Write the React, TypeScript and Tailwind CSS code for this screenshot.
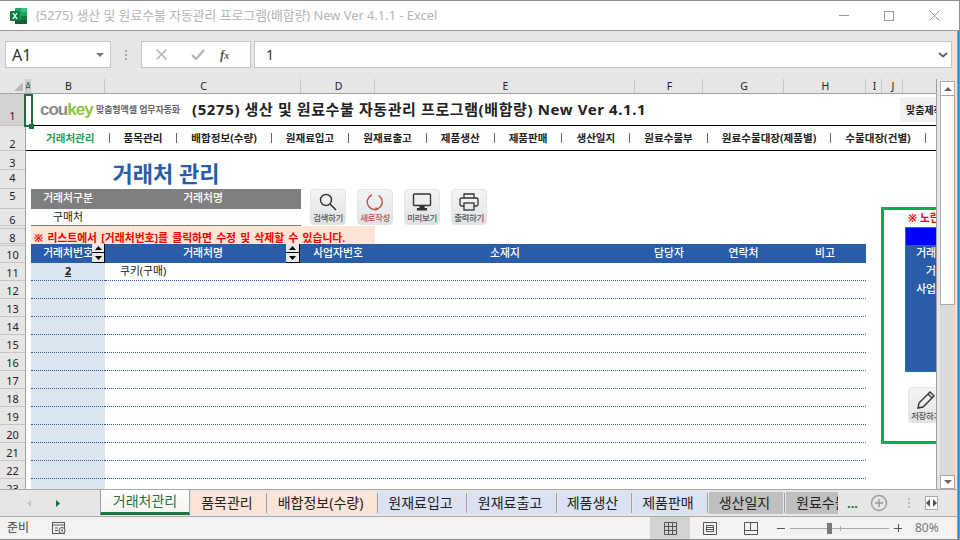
import React from "react";

const font = { fontFamily: '"Noto Sans", "Noto Sans CJK KR", sans-serif' };
const cols = "grid grid-cols-[5px_74px_196px_74px_260px_68px_81px_82px_70px]";

const colHeads: [string, number, boolean?][] = [
  ["A", 5, true], ["B", 74], ["C", 196], ["D", 74], ["E", 260], ["F", 68], ["G", 81], ["H", 82], ["I", 16], ["J", 21], ["", 33],
];
const rowHeads: [string, number, number][] = [
  ["1", 32, 4], ["2", 25, 1], ["3", 19, 1], ["4", 19, 5], ["5", 20, 7], ["6", 17, 0], ["", 3, 0], ["8", 15, 0], ["", 2, 0], ["10", 17, 2],
  ["11", 18, 2], ["12", 18, 2], ["13", 18, 2], ["14", 18, 2], ["15", 18, 2], ["16", 18, 2], ["17", 18, 2], ["18", 18, 2], ["19", 18, 2], ["20", 18, 2], ["21", 18, 2], ["22", 18, 2], ["23", 18, 2],
];
const nav = ["품목관리", "배합정보(수량)", "원재료입고", "원재료출고", "제품생산", "제품판매", "생산일지", "원료수불부", "원료수불대장(제품별)", "수불대장(건별)"];
const blankRows = Array.from({ length: 11 }, (_, i) => i);

function Spinner({ wide }: { wide?: boolean }) {
  return (
    <div className={`absolute top-0 flex h-[19px] flex-col border-r border-b border-black bg-[#e8e8e8] ${wide ? "right-[1px] w-[14px]" : "right-0 w-[13px]"}`}>
      <div className="flex h-[9px] items-center justify-center border-b border-black">
        <svg width="7" height="4" viewBox="0 0 7 4"><path d="M3.5 0L7 4H0z" fill="#000" /></svg>
      </div>
      <div className="flex flex-1 items-center justify-center">
        <svg width="7" height="4" viewBox="0 0 7 4"><path d="M0 0h7L3.5 4z" fill="#000" /></svg>
      </div>
    </div>
  );
}

function ShapeButton({ label, red, children }: { label: string; red?: boolean; children: React.ReactNode }) {
  return (
    <div className="flex h-[36px] w-[36px] shrink-0 flex-col items-center rounded-[4px] border border-[#e4e4e4] bg-gradient-to-b from-[#f4f4f4] to-[#dfe3e6] pt-[2px]">
      <div className="flex h-[20px] items-center justify-center">{children}</div>
      <div className={`whitespace-nowrap text-[8.5px] font-medium leading-[12px] tracking-[-0.4px] ${red ? "text-[#c0504d]" : "text-[#555]"}`}>{label}</div>
    </div>
  );
}

function Tab({ label, cls, w }: { label: string; cls: string; w: number }) {
  return (
    <>
      <div style={{ width: w }} className={`flex h-[22px] shrink-0 items-center justify-center overflow-hidden whitespace-nowrap pb-[2px] pr-[3px] text-[14px] text-[#222] ${cls}`}>{label}</div>
      <div className="mx-[1px] h-[20px] w-[1px] shrink-0 bg-[#a0a0a0]" />
    </>
  );
}

export default function App() {
  return (
    <div style={font} className="flex h-[540px] w-[960px] flex-col overflow-hidden border-t border-r border-b border-[#8f8f8f] bg-white text-black">
      {/* Title bar */}
      <div className="flex h-[30px] shrink-0 items-center border-b border-[#9a9a9a] bg-white pl-[10px]">
        <svg width="17" height="16" viewBox="0 0 17 16" className="shrink-0">
          <rect x="5" y="0" width="12" height="16" rx="1" fill="#21a366" />
          <rect x="11" y="0" width="6" height="4" fill="#33c481" />
          <rect x="11" y="8" width="6" height="4" fill="#107c41" />
          <rect x="5" y="12" width="12" height="4" fill="#185c37" />
          <rect x="0" y="3" width="10" height="10" rx="1" fill="#107c41" />
          <path d="M2.4 5h1.5L5 7l1.2-2h1.4L5.8 8l1.9 3H6.2L5 9 3.8 11H2.3l1.9-3z" fill="#fff" />
        </svg>
        <div className="ml-[9px] whitespace-nowrap text-[12.85px] text-[#b4b4b4]">(5275) 생산 및 원료수불 자동관리 프로그램(배합량) New Ver 4.1.1 - Excel</div>
        <div className="ml-auto flex items-center gap-[35px] pr-[19px]">
          <div className="h-[1px] w-[10px] bg-[#9a9a9a]" />
          <div className="h-[10px] w-[10px] border border-[#9a9a9a]" />
          <svg width="11" height="11" viewBox="0 0 11 11"><path d="M0.5 0.5l10 10M10.5 0.5l-10 10" stroke="#9a9a9a" fill="none" /></svg>
        </div>
      </div>

      {/* Formula bar */}
      <div className="flex h-[48px] shrink-0 items-start border-r border-[#1e88d0] bg-[#e6e6e6] pl-[5px] pr-[6px] pt-[10px] shadow-[inset_-1px_0_0_#a0a0a0]">
        <div className="flex h-[27px] w-[106px] shrink-0 items-center border border-[#c6c6c6] bg-white pl-[6px] text-[16px] text-[#333]">
          A1
          <svg width="8" height="4" viewBox="0 0 8 4" className="ml-auto mr-[6px]"><path d="M0 0h8L4 4z" fill="#777" /></svg>
        </div>
        <div className="flex h-[27px] w-[30px] shrink-0 flex-col items-center justify-center gap-[2px]">
          <div className="h-[2px] w-[2px] bg-[#a8a8a8]" />
          <div className="h-[2px] w-[2px] bg-[#a8a8a8]" />
          <div className="h-[2px] w-[2px] bg-[#a8a8a8]" />
        </div>
        <div className="flex h-[27px] w-[110px] shrink-0 items-center border border-[#c6c6c6] bg-white pl-[14px]">
          <svg width="11" height="11" viewBox="0 0 11 11"><path d="M0.5 0.5l10 10M10.5 0.5l-10 10" stroke="#b4b4b4" strokeWidth="1.5" fill="none" /></svg>
          <svg width="14" height="11" viewBox="0 0 14 11" className="ml-[24px]"><path d="M1 6l4 4 8-9" stroke="#b4b4b4" strokeWidth="2.2" fill="none" /></svg>
          <span style={{ fontFamily: '"Liberation Serif", serif' }} className="ml-[15px] text-[13px] font-bold italic text-[#555]">f<span className="text-[10px]">x</span></span>
        </div>
        <div className="ml-[3px] flex h-[27px] flex-1 items-center border border-[#c6c6c6] bg-white pl-[11px] text-[14px] text-[#333]">
          1
          <svg width="10" height="6" viewBox="0 0 10 6" className="ml-auto mr-[3px]"><path d="M1 1l4 3.5L9 1" stroke="#666" strokeWidth="1.8" fill="none" /></svg>
        </div>
      </div>

      {/* Grid + scrollbar */}
      <div className="flex h-[410px] shrink-0 bg-[#e6e6e6]">
        <div className="flex w-[936px] shrink-0 flex-col overflow-hidden">
          {/* Column headers */}
          <div className="flex h-[15px] shrink-0 border-b border-[#a0a0a0] bg-[#e6e6e6]">
            <div className="flex h-[14px] w-[26px] shrink-0 items-end justify-end border-r border-[#c6c6c6] pb-[2px] pr-[2px]">
              <svg width="9" height="9" viewBox="0 0 9 9"><path d="M9 0v9H0z" fill="#b8b8b8" /></svg>
            </div>
            {colHeads.map(([c, w, sel], i) => (
              <div key={i} style={{ width: w }} className={`flex h-[14px] shrink-0 items-center justify-center overflow-hidden text-[10.5px] leading-none ${sel ? "bg-[#d2d2d2] text-[#1d6f42]" : "pl-[2px] text-[#222]"} ${i === colHeads.length - 1 ? "" : "border-r border-[#c6c6c6]"}`}>{c}</div>
            ))}
          </div>

          <div className="relative flex h-[395px] overflow-hidden">
            {/* Row headers */}
            <div className="flex w-[26px] shrink-0 flex-col border-r border-[#a0a0a0] bg-[#e6e6e6]">
              {rowHeads.map(([r, h, pb], i) => (
                <div key={i} style={{ height: h, paddingBottom: pb }} className={`flex shrink-0 items-end justify-center overflow-hidden border-b border-[#c6c6c6] text-[11px] leading-[10px] text-[#222] ${r === "1" ? "bg-[#d2d2d2]" : ""}`}>{r}</div>
              ))}
            </div>

            {/* Sheet */}
            <div className="relative w-[910px] shrink-0 overflow-hidden bg-white text-[10.8px] leading-none">
              {/* Row 1 */}
              <div className="flex h-[32px] items-center border-b border-black pl-[14px]">
                <div style={{ fontFamily: '"Liberation Sans", sans-serif' }} className="w-[56px] shrink-0 text-[17px] font-bold tracking-[-1px]">
                  <span className="text-[#8c8c8c]">cou</span><span className="text-[#8dc63f]">key</span>
                </div>
                <div className="w-[96px] shrink-0 whitespace-nowrap text-[9px] font-bold tracking-[-0.1px] text-[#666]">맞춤형엑셀 업무자동화</div>
                <div className="whitespace-nowrap text-[15px] font-bold tracking-[0.6px] text-[#222]">(5275) 생산 및 원료수불 자동관리 프로그램(배합량) New Ver 4.1.1</div>
                <div className="ml-auto flex h-[25px] w-[36px] items-center overflow-hidden whitespace-nowrap bg-[#f2f2f2] pl-[6px] text-[10px] font-bold text-[#222]">맞춤제작</div>
              </div>
              {/* Row 2 */}
              <div className="flex h-[25px] items-center gap-[14px] whitespace-nowrap border-b border-black pl-[20px] text-[10.55px] font-bold text-[#222]">
                <span className="text-[#1fa055]">거래처관리</span>
                {nav.map((n) => (
                  <React.Fragment key={n}>
                    <span className="h-[10px] w-[1px] bg-[#666]" />
                    <span>{n}</span>
                  </React.Fragment>
                ))}
                <span className="h-[10px] w-[1px] bg-[#666]" />
              </div>
              {/* Rows 3-4 */}
              <div className={`${cols} h-[38px]`}>
                <div />
                <div className="col-span-2 flex items-center justify-center pt-[5px] text-[22px] font-bold text-[#2a5caa]">거래처 관리</div>
              </div>
              {/* Row 5 */}
              <div className={`${cols} h-[20px]`}>
                <div />
                <div className="flex items-center justify-center bg-[#7f7f7f] pb-[1px] font-medium text-white">거래처구분</div>
                <div className="flex items-center justify-center bg-[#7f7f7f] pb-[1px] font-medium text-white">거래처명</div>
              </div>
              {/* Row 6 */}
              <div className={`${cols} h-[17px]`}>
                <div />
                <div className="flex items-center justify-center border-b border-[#7f7f7f] pt-[1px] text-[#222]">구매처</div>
                <div className="border-b border-[#7f7f7f]" />
              </div>
              {/* Rows 7-8 */}
              <div className={`${cols} h-[18px]`}>
                <div />
                <div className="col-span-3 flex items-center whitespace-nowrap bg-[#fce4d6] pl-[3px] pt-[6px] text-[10.8px] font-bold text-[#ff0000] [word-spacing:1.4px]">※ 리스트에서 [거래처번호]를 클릭하면 수정 및 삭제할 수 있습니다.</div>
              </div>
              {/* Rows 9-10 */}
              <div className={`${cols} h-[19px]`}>
                <div />
                {["거래처번호", "거래처명", "사업자번호", "소재지", "담당자", "연락처", "비고"].map((h, i) => (
                  <div key={h} className="relative flex items-center justify-center bg-[#2a5caa] font-medium text-white">
                    {h}
                    {i === 0 && <Spinner />}
                    {i === 1 && <Spinner wide />}
                  </div>
                ))}
              </div>
              {/* Row 11 */}
              <div className={`${cols} h-[18px]`}>
                <div />
                <div className="flex items-center justify-center border-b border-dotted border-[#2a5caa] bg-[#dce6f1] font-bold text-[#222] underline">2</div>
                <div className="flex items-center border-b border-dotted border-[#2a5caa] pl-[15px] text-[#222]">쿠키(구매)</div>
                <div className="col-span-5 border-b border-dotted border-[#2a5caa]" />
              </div>
              {/* Rows 12-22 */}
              {blankRows.map((r) => (
                <div key={r} className={`${cols} h-[18px]`}>
                  <div />
                  <div className="border-b border-dotted border-[#2a5caa] bg-[#dce6f1]" />
                  <div className="col-span-6 border-b border-dotted border-[#2a5caa]" />
                </div>
              ))}
              {/* Row 23 */}
              <div className={`${cols} h-[18px]`}>
                <div />
                <div className="bg-[#dce6f1]" />
              </div>

              {/* Floating shape buttons */}
              <div className="absolute left-[284px] top-[95px] flex gap-[11px]">
                <ShapeButton label="검색하기">
                  <svg width="18" height="18" viewBox="0 0 18 18"><circle cx="7" cy="7" r="5.5" stroke="#333" strokeWidth="1.4" fill="none" /><path d="M11 11l6 6" stroke="#333" strokeWidth="1.6" /></svg>
                </ShapeButton>
                <ShapeButton label="새로작성" red>
                  <svg width="18" height="18" viewBox="0 0 18 18"><path d="M6 2A7.5 7.5 0 1 0 12.5 2.5" stroke="#c0504d" strokeWidth="1.4" fill="none" /><path d="M9.5 14l3 2-3 2z" fill="#c0504d" /></svg>
                </ShapeButton>
                <ShapeButton label="미리보기">
                  <svg width="20" height="18" viewBox="0 0 20 18"><rect x="1.5" y="1" width="17" height="11.5" rx="1" stroke="#333" strokeWidth="1.4" fill="none" /><path d="M8 12.5v3H5.5v1.5h9v-1.5H12v-3" stroke="#333" strokeWidth="1.2" fill="#333" /></svg>
                </ShapeButton>
                <ShapeButton label="출력하기">
                  <svg width="20" height="18" viewBox="0 0 20 18"><path d="M5 5V1h10v4" stroke="#333" strokeWidth="1.3" fill="none" /><rect x="1" y="5" width="18" height="8" rx="1.5" stroke="#333" strokeWidth="1.3" fill="none" /><rect x="5" y="10" width="10" height="7" stroke="#333" strokeWidth="1.3" fill="#e8eaec" /></svg>
                </ShapeButton>
              </div>

              {/* Green side panel */}
              <div className="absolute left-[855px] top-[113px] h-[237px] w-[120px] border-[3px] border-[#00b050] bg-white">
                <div className="whitespace-nowrap pl-[24px] pt-[3px] text-[10.8px] font-bold text-[#ff0000]">※ 노란색 부분을</div>
                <div className="mt-[3px] ml-[21px] h-[145px] w-[72px] border border-[#1f6fb5] bg-[#2a5caa] font-medium text-white">
                  <div className="h-[17px] bg-[#0000ff]" />
                  <div className="flex h-[18px] items-center justify-center whitespace-nowrap">거래처번호</div>
                  <div className="flex h-[18px] items-center justify-center whitespace-nowrap">거래처</div>
                  <div className="flex h-[18px] items-center justify-center whitespace-nowrap">사업자번호</div>
                </div>
                <div className="ml-[24px] mt-[15px]">
                  <ShapeButton label="저장하기">
                    <svg width="20" height="20" viewBox="0 0 20 20"><path d="M3 13L14 2l4 4L7 17l-5 1z" stroke="#333" strokeWidth="1.4" fill="none" /><path d="M12 4l4 4" stroke="#333" strokeWidth="1.2" /></svg>
                  </ShapeButton>
                </div>
              </div>
            </div>

            {/* A1 selection */}
            <div className="absolute left-[24px] top-0 h-[33px] w-[9px] border-2 border-[#1d6f42]" />
            <div className="absolute left-[29px] top-[30px] h-[5px] w-[5px] bg-[#1d6f42]" />
          </div>
        </div>

        {/* Scrollbar */}
        <div className="flex w-[23px] shrink-0 flex-col border-l border-r border-l-[#a0a0a0] border-r-[#1e88d0] bg-[#e6e6e6] pl-[3px] pr-[3px] pt-[2px] shadow-[inset_-1px_0_0_#a0a0a0]">
          <div className="flex h-[15px] shrink-0 items-center justify-center border border-[#a8a8a8] bg-white">
            <svg width="8" height="4" viewBox="0 0 8 4"><path d="M4 0l4 4H0z" fill="#666" /></svg>
          </div>
          <div className="flex-1 bg-[#dadada]">
            <div className="h-[209px] border border-t-0 border-[#a8a8a8] bg-white" />
          </div>
          <div className="flex h-[14px] shrink-0 items-center justify-center border border-[#a8a8a8] bg-white">
            <svg width="8" height="4" viewBox="0 0 8 4"><path d="M0 0h8L4 4z" fill="#666" /></svg>
          </div>
        </div>
      </div>

      {/* Sheet tabs */}
      <div className="flex h-[28px] shrink-0 items-start border-t border-b border-r border-[#a8a8a8] border-r-[#1e88d0] bg-[#e6e6e6] shadow-[inset_-1px_0_0_#a0a0a0]">
        <div className="flex h-[26px] w-[100px] shrink-0 items-center pl-[27px]">
          <svg width="4" height="7" viewBox="0 0 4 7"><path d="M4 0v7L0 3.5z" fill="#c4c4c4" /></svg>
          <svg width="4" height="7" viewBox="0 0 4 7" className="ml-[25px]"><path d="M0 0v7l4-3.5z" fill="#1d6f42" /></svg>
        </div>
        <div className="flex h-[25px] w-[90px] shrink-0 items-center justify-center whitespace-nowrap border-x border-b-[3px] border-[#a0a0a0] border-b-[#217346] bg-gradient-to-b from-white to-[#f7f3ee] pb-[1px] text-[14px] text-[#217346]">거래처관리</div>
        <div className="flex h-[26px] shrink-0 items-center">
          <div className="w-[2px]" />
          <Tab label="품목관리" cls="bg-[#fce4d6]" w={73} />
          <Tab label="배합정보(수량)" cls="bg-[#fce4d6]" w={108} />
          <Tab label="원재료입고" cls="bg-[#d9e1f2]" w={86} />
          <Tab label="원재료출고" cls="bg-[#d9e1f2]" w={87} />
          <Tab label="제품생산" cls="bg-[#d9e1f2]" w={72} />
          <Tab label="제품판매" cls="bg-[#d9e1f2]" w={73} />
          <Tab label="생산일지" cls="bg-[#bfbfbf]" w={74} />
          <div className="flex h-[22px] w-[52px] shrink-0 items-center overflow-hidden whitespace-nowrap bg-[#bfbfbf] pb-[2px] pl-[10px] text-[14px] text-[#222]">원료수불부</div>
          <div className="ml-[9px] w-[14px] text-[13px] font-bold leading-none text-[#1d6f42]">...</div>
          <svg width="18" height="18" viewBox="0 0 18 18" className="ml-[9px]"><circle cx="9" cy="9" r="7.5" stroke="#9a9a9a" strokeWidth="1.4" fill="none" /><path d="M9 5v8M5 9h8" stroke="#9a9a9a" strokeWidth="1.5" /></svg>
          <div className="ml-[20px] flex flex-col gap-[2px]">
            <div className="h-[2px] w-[2px] bg-[#b8b8b8]" />
            <div className="h-[2px] w-[2px] bg-[#b8b8b8]" />
            <div className="h-[2px] w-[2px] bg-[#b8b8b8]" />
          </div>
          <div className="ml-[15px] flex h-[14px] w-[13px] items-center justify-center border border-[#a8a8a8] bg-white">
            <svg width="11" height="8" viewBox="0 0 11 8"><path d="M4 0v8L0 4zM7 0v8l4-4z" fill="#555" /></svg>
          </div>
        </div>
      </div>

      {/* Status bar */}
      <div className="flex flex-1 items-center border-r border-[#1e88d0] bg-[#f3f2f1] pl-[7px] text-[12px] text-[#444] shadow-[inset_-1px_0_0_#a0a0a0]">
        <span className="w-[45px]">준비</span>
        <svg width="14" height="13" viewBox="0 0 14 13"><rect x="0.5" y="0.5" width="12" height="11" fill="none" stroke="#555" /><path d="M0.5 3h12M3 6h3M3 8.5h3" stroke="#555" /><circle cx="10" cy="8.5" r="3" fill="#f3f2f1" stroke="#555" /><circle cx="10" cy="8.5" r="1" fill="#555" /></svg>
        <div className="ml-[584px] flex h-[22px] w-[40px] items-center justify-center bg-[#d2d2d2]">
          <svg width="13" height="13" viewBox="0 0 13 13"><path d="M0.5 0.5h12v12h-12zM4.5 0.5v12M8.5 0.5v12M0.5 4.5h12M0.5 8.5h12" fill="none" stroke="#555" /></svg>
        </div>
        <svg width="14" height="13" viewBox="0 0 14 13" className="ml-[13px]"><path d="M0.5 0.5h13v12h-13zM3.5 3.5h7v6h-7zM3.5 5.5h7M3.5 7.5h7" fill="none" stroke="#555" /></svg>
        <svg width="14" height="13" viewBox="0 0 14 13" className="ml-[27px]"><path d="M0.5 0.5h13v12h-13zM0.5 8.5h13M6.5 0.5v8" fill="none" stroke="#555" /></svg>
        <div className="ml-[19px] h-[1px] w-[8px] bg-[#555]" />
        <div className="relative ml-[5px] h-[1px] w-[99px] bg-[#a8a8a8]">
          <div className="absolute left-[37px] top-[-5px] h-[11px] w-[5px] bg-[#777]" />
          <div className="absolute left-[50px] top-[-2px] h-[5px] w-[1px] bg-[#a8a8a8]" />
        </div>
        <div className="relative ml-[5px] h-[1px] w-[8px] bg-[#555]">
          <div className="absolute left-[3.5px] top-[-3.5px] h-[8px] w-[1px] bg-[#555]" />
        </div>
        <span className="ml-[13px] text-[12px] text-[#777]">80%</span>
      </div>
    </div>
  );
}
